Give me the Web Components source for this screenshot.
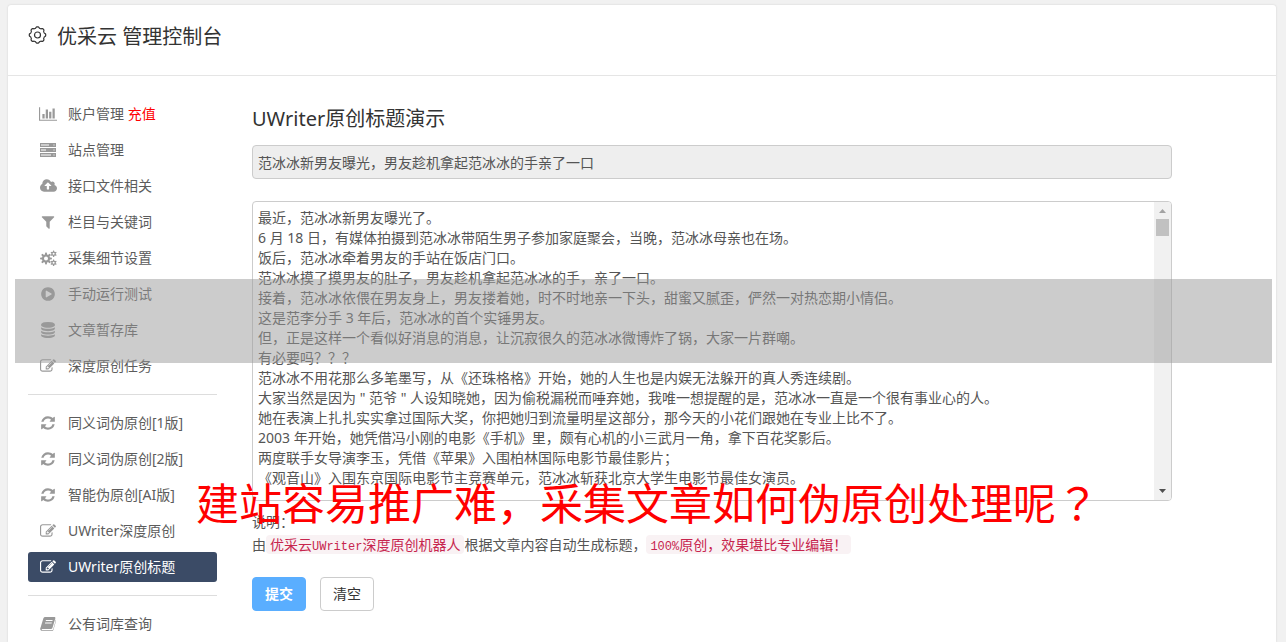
<!DOCTYPE html>
<html lang="zh-CN">
<head>
<meta charset="utf-8">
<title>优采云 管理控制台</title>
<style>
  body { margin: 0; background: #f1f1f1; color: #555; font: 14px/20px "Noto Sans", "Noto Sans CJK SC", sans-serif; }
</style>
</head>
<body>
<console-page>
  <page-header slot="header">优采云 管理控制台</page-header>
  <side-nav slot="nav">
    <nav-group>
      <nav-item icon="chart">账户管理 <span style="color:red">充值</span></nav-item>
      <nav-item icon="server">站点管理</nav-item>
      <nav-item icon="cloud">接口文件相关</nav-item>
      <nav-item icon="filter">栏目与关键词</nav-item>
      <nav-item icon="cogs">采集细节设置</nav-item>
      <nav-item icon="play">手动运行测试</nav-item>
      <nav-item icon="database">文章暂存库</nav-item>
      <nav-item icon="edit">深度原创任务</nav-item>
    </nav-group>
    <nav-group>
      <nav-item icon="refresh">同义词伪原创[1版]</nav-item>
      <nav-item icon="refresh">同义词伪原创[2版]</nav-item>
      <nav-item icon="refresh">智能伪原创[AI版]</nav-item>
      <nav-item icon="edit">UWriter深度原创</nav-item>
      <nav-item icon="edit" active>UWriter原创标题</nav-item>
    </nav-group>
    <nav-group>
      <nav-item icon="book">公有词库查询</nav-item>
    </nav-group>
  </side-nav>
  <title-demo></title-demo>
</console-page>
<shade-band></shade-band>
<promo-caption>建站容易推广难，采集文章如何伪原创处理呢<span lang="zh-TW">？</span></promo-caption>

<script>
const define = (name, html, setup) => customElements.define(name, class extends HTMLElement {
  connectedCallback() {
    if (this.shadowRoot) return;
    const root = this.attachShadow({ mode: "open" });
    const t = document.createElement("template");
    t.innerHTML = html;
    root.append(t.content.cloneNode(true));
    if (setup) setup(this, root);
  }
});

/* Outline of a toothed wheel; r is the mean radius, d the depth of a tooth. */
function wheel(cx, cy, r, d, teeth, sharp) {
  const n = teeth * 12;
  let p = "";
  for (let i = 0; i < n; i++) {
    const a = i / n * Math.PI * 2;
    const wave = Math.max(-1, Math.min(1, Math.cos(a * teeth) * sharp));
    const q = r + d * wave;
    p += (i ? "L" : "M") + (cx + q * Math.sin(a)).toFixed(2) + " " + (cy - q * Math.cos(a)).toFixed(2);
  }
  return p + "Z";
}
const ring = (cx, cy, r) => `M${cx - r} ${cy}a${r} ${r} 0 1 0 ${2 * r} 0a${r} ${r} 0 1 0 ${-2 * r} 0Z`;

const icons = {
  chart: ["0 0 2048 1792", 18, "M640 896v512h-256v-512h256zm384-512v1024h-256v-1024h256zm1024 1152v128h-2048v-1536h128v1408h1920zm-640-896v768h-256v-768h256zm384-384v1152h-256v-1152h256z"],
  server: ["0 0 16 16", 16, "M0 1H16V5H0ZM1 2.500V3.500H9V2.500ZM0 6H16V10H0ZM1 7.500V8.500H6V7.500ZM0 11H16V15H0ZM1 12.500V13.500H11V12.500ZM13.500 2.500V3.500H14.500V2.500ZM13.500 7.500V8.500H14.500V7.500ZM13.500 12.500V13.500H14.500V12.500Z"],
  cloud: ["0 0 1920 1792", 17, "M1280 864q0-14-9-23l-352-352q-9-9-23-9t-23 9l-351 351q-10 12-10 24 0 14 9 23t23 9h224v352q0 13 9.5 22.5t22.5 9.5h192q13 0 22.5-9.5t9.5-22.5v-352h224q13 0 22.5-9.5t9.5-22.5zm640 288q0 159-112.5 271.5t-271.5 112.5h-1088q-185 0-316.5-131.5t-131.5-316.5q0-130 70-240t188-165q-2-30-2-43 0-212 150-362t362-150q156 0 285.5 87t188.5 231q71-62 166-62 106 0 181 75t75 181q0 76-41 138 130 31 213.5 135.5t83.5 238.5z"],
  filter: ["0 0 1792 1792", 16, "M1595 295q17 41-14 70l-493 493v742q0 42-39 59-13 5-25 5-27 0-45-19l-256-256q-19-19-19-45v-486l-493-493q-31-29-14-70 17-39 59-39h1280q42 0 59 39z"],
  cogs: ["0 0 17 16", 17, wheel(6, 8.5, 5, .9, 8, 2) + ring(6, 8.5, 2) + wheel(13.6, 3.8, 2.7, .5, 6, 2) + ring(13.6, 3.8, 1) + wheel(13.6, 12.8, 2.7, .5, 6, 2) + ring(13.6, 12.8, 1)],
  play: ["0 0 1792 1792", 16, "M896 128q209 0 385.5 103t279.5 279.5 103 385.5-103 385.5-279.5 279.5-385.5 103-385.5-103-279.5-279.5-103-385.5 103-385.5 279.5-279.5 385.5-103zm384 823q32-18 32-55t-32-55l-544-320q-31-19-64-1-32 19-32 56v640q0 37 32 56 16 8 32 8 17 0 32-9z"],
  database: ["0 0 1792 1792", 16, "M896 768q237 0 443-43t325-127v170q0 69-103 128t-280 93.5-385 34.5-385-34.5-280-93.5-103-128v-170q119 84 325 127t443 43zm0 768q237 0 443-43t325-127v170q0 69-103 128t-280 93.5-385 34.5-385-34.5-280-93.5-103-128v-170q119 84 325 127t443 43zm0-384q237 0 443-43t325-127v170q0 69-103 128t-280 93.5-385 34.5-385-34.5-280-93.5-103-128v-170q119 84 325 127t443 43zm0-1152q208 0 385 34.5t280 93.5 103 128v128q0 69-103 128t-280 93.5-385 34.5-385-34.5-280-93.5-103-128v-128q0-69 103-128t280-93.5 385-34.5z"],
  edit: ["0 0 1792 1792", 16, "M888 1184l116-116-152-152-116 116v56h96v96h56zm440-720q-16-16-33 1l-350 350q-17 17-1 33t33-1l350-350q17-17 1-33zm80 594v190q0 119-84.5 203.5t-203.5 84.5h-832q-119 0-203.5-84.5t-84.5-203.5v-832q0-119 84.5-203.5t203.5-84.5h832q63 0 117 25 15 7 18 23 3 17-9 29l-49 49q-14 14-32 8-23-6-45-6h-832q-66 0-113 47t-47 113v832q0 66 47 113t113 47h832q66 0 113-47t47-113v-126q0-13 9-22l64-64q15-15 35-7t20 29zm-96-738l288 288-672 672h-288v-288zm444 132l-92 92-288-288 92-92q28-28 68-28t68 28l152 152q28 28 28 68t-28 68z"],
  refresh: ["0 0 1792 1792", 16, "M1639 1056q0 5-1 7-64 268-268 434.5t-478 166.5q-146 0-282.5-55t-243.5-157l-129 129q-19 19-45 19t-45-19-19-45v-448q0-26 19-45t45-19h448q26 0 45 19t19 45-19 45l-137 137q71 66 161 102t187 36q134 0 250-65t186-179q11-17 53-117 8-23 30-23h192q13 0 22.5 9.5t9.5 22.5zm25-800v448q0 26-19 45t-45 19h-448q-26 0-45-19t-19-45 19-45l138-138q-148-137-349-137-134 0-250 65t-186 179q-11 17-53 117-8 23-30 23h-199q-13 0-22.5-9.5t-9.5-22.5v-7q65-268 270-434.5t480-166.5q146 0 284 55.5t245 156.5l130-129q19-19 45-19t45 19 19 45z"],
  book: ["0 0 16 16", 16, "M5.2 1H14.6Q15.6 1.3 15.3 2.4L12.4 12Q12 13 11 13H2.4Q1.6 13.1 1.7 13.7Q1.9 14.2 2.8 14.2H12Q12.8 14.2 13.1 13.4L15.6 5V3.6Q16.3 4 16 5L13.4 13.9Q13 15 11.9 15H2.4Q.4 15 .2 13.2Q.1 12.4 .5 11.8L3.4 2.3Q3.9 1 5.2 1ZM6 4L5.7 5H12.4L12.7 4ZM5.2 6.4L4.9 7.4H11.6L11.9 6.4Z"],
};

define("ui-icon", `<style>
  :host { display: flex; flex: none; width: 20px; height: 16px; justify-content: center; color: #999; }
  svg { flex: none; height: 16px; fill: currentColor; fill-rule: evenodd; }
</style><svg aria-hidden="true"><path/></svg>`, (host, root) => {
  const [box, width, d] = icons[host.getAttribute("name")];
  const svg = root.querySelector("svg");
  svg.setAttribute("viewBox", box);
  svg.setAttribute("width", width);
  svg.firstChild.setAttribute("d", d);
});

define("console-page", `<style>
  :host { display: flex; padding: 5px 10px 0 8px; min-height: 100vh; box-sizing: border-box; }
  .panel { flex: 1; min-width: 0; background: #fff; border-radius: 3px 3px 0 0; box-shadow: 0 0 2px #ccc; }
  .body { display: flex; gap: 35px; padding: 23px 20px 0; }
  main { flex: 1; min-width: 0; }
</style>
<div class="panel">
  <slot name="header"></slot>
  <div class="body"><slot name="nav"></slot><main><slot></slot></main></div>
</div>`);

define("page-header", `<style>
  :host { display: block; border-bottom: 1px solid #e5e5e5; color: #333; }
  h1 { display: flex; align-items: center; gap: 10px; margin: 0; padding: 17px 20px 23px; font-size: 20px; line-height: 30px; font-weight: 400; }
  svg { width: 19px; height: 22px; fill: none; stroke: currentColor; stroke-width: 1.2; }
</style>
<h1><svg viewBox="0 0 19 22" aria-hidden="true"><path/><circle cx="9.5" cy="9" r="3"/></svg><span><slot></slot></span></h1>`,
(host, root) => root.querySelector("path").setAttribute("d", wheel(9.5, 9, 7.6, .6, 8, 1.6)));

define("side-nav", `<style>:host { display: block; flex: none; width: 189px; }</style><nav><slot></slot></nav>`);

define("nav-group", `<style>
  :host { display: block; }
  :host(:not(:first-child)) { margin-top: 13px; padding-top: 13px; border-top: 1px solid #ddd; }
  div { display: flex; flex-direction: column; gap: 6px; }
</style><div><slot></slot></div>`);

define("nav-item", `<style>
  :host { display: block; }
  a { display: flex; align-items: center; gap: 10px; height: 30px; padding: 0 10px; border-radius: 3px; color: #5c5c5c; text-decoration: none; }
  :host([active]) a { background: #3b4b66; color: #fff; }
  :host([active]) ui-icon { color: #fff; }
</style><a href="#"><span><slot></slot></span></a>`, (host, root) => {
  const icon = document.createElement("ui-icon");
  icon.setAttribute("name", host.getAttribute("icon"));
  root.querySelector("a").prepend(icon);
  if (host.hasAttribute("active")) root.querySelector("a").setAttribute("aria-current", "page");
});

define("scroll-rail", `<style>
  :host { display: flex; flex-direction: column; flex: none; width: 17px; background: #f1f1f1; }
  i { width: 13px; height: 17px; margin: 0 2px auto; background: #c1c1c1; }
  svg { width: 17px; height: 17px; fill: #505050; }
  svg:first-of-type { fill: #a3a3a3; }
</style>
<svg viewBox="0 0 17 17"><path d="M5 11L8.500 7L12 11Z"/></svg><i></i><svg viewBox="0 0 17 17"><path d="M5 6L8.500 10L12 6Z"/></svg>`);

define("ui-button", `<style>
  :host { display: block; }
  button { height: 34px; padding: 0 12px; border: 1px solid #ccc; border-radius: 4px; background: #fff; color: #333; font: inherit; }
  :host([primary]) button { border-color: #5aaeff; background: #5aaeff; color: #fff; font-weight: bold; }
</style><button type="button"><slot></slot></button>`);

define("code-chip", `<style>
  :host { display: inline-block; padding: 0 4px; border-radius: 4px; background: #f9f2f4; color: #c7254e; line-height: 19px; }
  code { font: inherit; }
</style><code><slot></slot></code>`);

define("title-demo", `<style>
  :host { display: block; max-width: 920px; padding-top: 9px; }
  h2 { margin: 0 0 15px; color: #333; font-size: 20px; line-height: 22px; font-weight: 400; }
  input, .area { box-sizing: border-box; width: 100%; border: 1px solid #ccc; border-radius: 4px; }
  input, textarea { color: #555; font: inherit; padding: 6px 5px; outline: 0; }
  input { display: block; height: 34px; background: #eee; }
  .area { display: flex; height: 300px; margin-top: 22px; overflow: hidden; background: #fff; }
  textarea { flex: 1; min-width: 0; border: 0; resize: none; overflow: hidden; background: none; }
  .note { margin-top: 9px; line-height: 23px; }
  p { margin: 0; }
  small { font: 12px "Liberation Mono", monospace; }
  .actions { display: flex; gap: 14px; margin-top: 21px; }
</style>
<h2>UWriter原创标题演示</h2>
<input aria-label="标题" readonly value="范冰冰新男友曝光，男友趁机拿起范冰冰的手亲了一口">
<div class="area"><textarea aria-label="文章内容" spellcheck="false">最近，范冰冰新男友曝光了。
6 月 18 日，有媒体拍摄到范冰冰带陌生男子参加家庭聚会，当晚，范冰冰母亲也在场。
饭后，范冰冰牵着男友的手站在饭店门口。
范冰冰摸了摸男友的肚子，男友趁机拿起范冰冰的手，亲了一口。
接着，范冰冰依偎在男友身上，男友搂着她，时不时地亲一下头，甜蜜又腻歪，俨然一对热恋期小情侣。
这是范李分手 3 年后，范冰冰的首个实锤男友。
但，正是这样一个看似好消息的消息，让沉寂很久的范冰冰微博炸了锅，大家一片群嘲。
有必要吗？？？
范冰冰不用花那么多笔墨写，从《还珠格格》开始，她的人生也是内娱无法躲开的真人秀连续剧。
大家当然是因为 " 范爷 " 人设知晓她，因为偷税漏税而唾弃她，我唯一想提醒的是，范冰冰一直是一个很有事业心的人。
她在表演上扎扎实实拿过国际大奖，你把她归到流量明星这部分，那今天的小花们跟她在专业上比不了。
2003 年开始，她凭借冯小刚的电影《手机》里，颇有心机的小三武月一角，拿下百花奖影后。
两度联手女导演李玉，凭借《苹果》入围柏林国际电影节最佳影片；
《观音山》入围东京国际电影节主竞赛单元，范冰冰斩获北京大学生电影节最佳女演员。</textarea><scroll-rail aria-hidden="true"></scroll-rail></div>
<div class="note">
  <p>说明：</p>
  <p>由<code-chip>优采云<small>UWriter</small>深度原创机器人</code-chip>根据文章内容自动生成标题，<code-chip><small>100%</small>原创，效果堪比专业编辑！</code-chip></p>
</div>
<div class="actions"><ui-button primary>提交</ui-button><ui-button>清空</ui-button></div>`);

/* Translucent strip laid across the whole page. */
define("shade-band", `<style>
  :host { position: absolute; top: 279px; left: 15px; right: 14px; height: 84px; background: rgba(153,153,153,.5); pointer-events: none; }
</style>`);

define("promo-caption", `<style>
  :host { position: absolute; top: 478px; left: 196px; color: red; font-size: 43px; line-height: 52px; white-space: nowrap; pointer-events: none; }
</style><slot></slot>`);
</script>
</body>
</html>
